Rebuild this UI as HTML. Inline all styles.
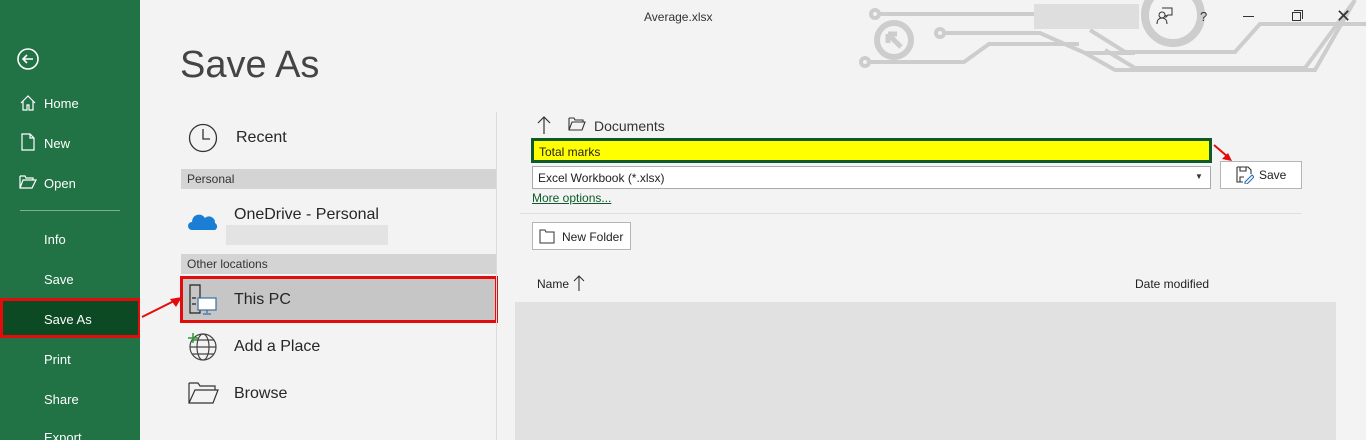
<!DOCTYPE html>
<html><head><meta charset="utf-8"><style>
*{margin:0;padding:0;box-sizing:border-box}
html,body{overflow:hidden}
body{width:1366px;height:440px;background:#f3f3f3;font-family:"Liberation Sans",sans-serif;position:relative;color:#262626}
.a{position:absolute}
.side{left:0;top:0;width:140px;height:440px;background:#217346;color:#fff;overflow:hidden}
.side div{position:absolute;font-size:13px;color:#fff}
.sec{left:181px;width:315px;height:20px;background:#d4d4d4;font-size:12px;padding:3px 6px;color:#333}
.loc{font-size:16px;color:#262626}
</style></head><body>
<div class="a side">
<svg class="a" style="left:16px;top:47px" width="24" height="24" viewBox="0 0 24 24"><circle cx="12" cy="12" r="10" fill="none" stroke="#fff" stroke-width="1.6"/><path d="M17 12H7M11 8l-4 4 4 4" fill="none" stroke="#fff" stroke-width="1.6"/></svg>
<svg class="a" style="left:19px;top:94px" width="18" height="18" viewBox="0 0 18 18"><path d="M2 9L9 2l7 7M4 7v9h4v-5h2v5h4V7" fill="none" stroke="#fff" stroke-width="1.2"/></svg>
<div style="left:44px;top:96px">Home</div>
<svg class="a" style="left:21px;top:133px" width="14" height="18" viewBox="0 0 14 18"><path d="M1 1h8l4 4v12H1z M9 1v4h4" fill="none" stroke="#fff" stroke-width="1.2"/></svg>
<div style="left:44px;top:136px">New</div>
<svg class="a" style="left:19px;top:175px" width="18" height="14" viewBox="0 0 18 14"><path d="M1 1h5l1 2h7v2 M1 1v12h12l4-8H4L1 13" fill="none" stroke="#fff" stroke-width="1.2"/></svg>
<div style="left:44px;top:176px">Open</div>
<div style="left:20px;top:210px;width:100px;height:1px;background:#7fb08f"></div>
<div style="left:44px;top:232px">Info</div>
<div style="left:44px;top:272px">Save</div>
<div style="left:0;top:298px;width:141px;height:40px;background:#0b4a22;border:3px solid #e30b0b"></div>
<div style="left:44px;top:312px">Save As</div>
<div style="left:44px;top:352px">Print</div>
<div style="left:44px;top:392px">Share</div>
<div style="left:44px;top:430px">Export</div>
</div>
<svg class="a" style="left:140px;top:295px" width="45" height="25"><path d="M2 22L38 4" stroke="#e30b0b" stroke-width="2"/><path d="M42 2l-12 2 6 8z" fill="#e30b0b"/></svg>
<svg class="a" style="left:840px;top:0" width="526" height="80" fill="none" stroke="#cdcdcd" stroke-width="4">
<circle cx="35" cy="14" r="4"/><path d="M39 14h160"/>
<circle cx="54" cy="40" r="17" stroke-width="6"/><path d="M48 34l13 13M48 34h9M48 34v9" stroke-width="5"/>
<circle cx="100" cy="33" r="4"/><path d="M104 33h96l45 20h50M245 53l30 17h200l40-70"/>
<circle cx="25" cy="62" r="4"/><path d="M29 62h95l25-18h90"/>
<path d="M250 30l35 22h110l25-28h106"/>
<path d="M265 50l30 18h170l50-68"/>
<circle cx="333" cy="15" r="28" stroke-width="8"/>
</svg>
<div class="a" style="left:1034px;top:4px;width:105px;height:25px;background:#dedede"></div>
<div class="a" style="left:644px;top:10px;font-size:12px;color:#333">Average.xlsx</div>
<svg class="a" style="left:1155px;top:6px" width="20" height="20" viewBox="0 0 20 20" fill="none" stroke="#333"><path d="M7 2h10v7h-4l-2 2v-2"/><circle cx="7" cy="9" r="3"/><path d="M2 18c0-4 2-6 5-6s5 2 5 6"/></svg>
<div class="a" style="left:1200px;top:9px;font-size:13px;color:#333">?</div>
<div class="a" style="left:1243px;top:16px;width:11px;height:1px;background:#333"></div>
<div class="a" style="left:1292px;top:12px;width:9px;height:9px;border:1px solid #333"></div>
<div class="a" style="left:1294px;top:10px;width:9px;height:9px;border-top:1px solid #333;border-right:1px solid #333"></div>
<div class="a" style="left:1336px;top:6px;font-size:18px;color:#333">✕</div>
<div class="a" style="left:180px;top:44px;font-size:38px;color:#444">Save As</div>
<svg class="a" style="left:188px;top:123px" width="30" height="30" viewBox="0 0 30 30" fill="none" stroke="#333" stroke-width="1.3"><circle cx="15" cy="15" r="13.5"/><path d="M15 6v10h7"/></svg>
<div class="a loc" style="left:236px;top:129px">Recent</div>
<div class="a sec" style="top:169px">Personal</div>
<svg class="a" style="left:188px;top:210px" width="30" height="22" viewBox="0 0 30 22"><path d="M4 20a4 4 0 0 1 0-8a7 7 0 0 1 13-4a6 6 0 0 1 10 5a4 4 0 0 1 0 7z" fill="#1a7ed4"/></svg>
<div class="a loc" style="left:234px;top:206px">OneDrive - Personal</div>
<div class="a" style="left:226px;top:225px;width:162px;height:20px;background:#e3e3e3"></div>
<div class="a sec" style="top:254px">Other locations</div>
<div class="a" style="left:180px;top:276px;width:318px;height:47px;background:#c6c6c6;border:3px solid #e30b0b"></div>
<svg class="a" style="left:188px;top:284px" width="30" height="32" viewBox="0 0 30 32" fill="none" stroke="#222" stroke-width="1.2"><path d="M2 1h10v28H2zM4 14h4M4 20h4"/><rect x="10" y="14" width="18" height="12" fill="#fff" stroke="#3b6ea5"/><path d="M19 26v3M15 30h8" stroke="#3b6ea5"/></svg>
<div class="a loc" style="left:234px;top:291px">This PC</div>
<svg class="a" style="left:186px;top:330px" width="32" height="32" viewBox="0 0 32 32" fill="none" stroke="#444" stroke-width="1.2"><circle cx="17" cy="17" r="13"/><ellipse cx="17" cy="17" rx="6" ry="13"/><path d="M4 17h26M6 10h22M6 24h22"/><path d="M2 8h10M7 3v10" stroke="#2a9a3a" stroke-width="1.5"/></svg>
<div class="a loc" style="left:234px;top:338px">Add a Place</div>
<svg class="a" style="left:188px;top:381px" width="32" height="24" viewBox="0 0 32 24" fill="none" stroke="#333" stroke-width="1.2"><path d="M1 2h9l2 3h15v4M1 2v20h24l5-13H7L1 22"/></svg>
<div class="a loc" style="left:234px;top:385px">Browse</div>
<div class="a" style="left:496px;top:112px;width:1px;height:328px;background:#dcdcdc"></div>
<svg class="a" style="left:537px;top:115px" width="14" height="20" fill="none" stroke="#333" stroke-width="1.2"><path d="M7 19V2M1 8l6-6 6 6"/></svg>
<svg class="a" style="left:568px;top:117px" width="18" height="14" viewBox="0 0 18 14" fill="none" stroke="#333" stroke-width="1.1"><path d="M1 1h5l1 2h8v2M1 1v12h13l3-8H4L1 13"/></svg>
<div class="a" style="left:594px;top:118px;font-size:14px;color:#333">Documents</div>
<div class="a" style="left:531px;top:138px;width:681px;height:25px;background:#ffff00;border:3px solid #0e5a28;font-size:12px;padding:4px 5px;color:#222">Total marks</div>
<div class="a" style="left:532px;top:166px;width:679px;height:23px;background:#fff;border:1px solid #aaa;font-size:12px;padding:4px 5px;color:#222">Excel Workbook (*.xlsx)</div>
<div class="a" style="left:1195px;top:172px;font-size:8px;color:#333">▼</div>
<svg class="a" style="left:1212px;top:143px" width="24" height="22"><path d="M2 2l14 12" stroke="#e30b0b" stroke-width="2"/><path d="M20 18l-10-2 6-6z" fill="#e30b0b"/></svg>
<div class="a" style="left:1220px;top:161px;width:82px;height:28px;background:#fff;border:1px solid #b5b5b5"></div>
<svg class="a" style="left:1236px;top:166px" width="18" height="18" viewBox="0 0 18 18" fill="none" stroke="#333" stroke-width="1.1"><path d="M1 1h11l3 3v4M1 1v15h6M4 1v4h6V1M4 16v-5h4"/><path d="M9 16l7-7 2 2-7 7h-2z" stroke="#2a6ab8"/></svg>
<div class="a" style="left:1259px;top:168px;font-size:12px;color:#222">Save</div>
<div class="a" style="left:532px;top:191px;font-size:12px;color:#0e5a28;text-decoration:underline">More options...</div>
<div class="a" style="left:520px;top:213px;width:782px;height:1px;background:#dedede"></div>
<div class="a" style="left:532px;top:222px;width:99px;height:28px;background:#fff;border:1px solid #b5b5b5"></div>
<svg class="a" style="left:539px;top:228px" width="16" height="16" viewBox="0 0 16 16" fill="none" stroke="#333"><path d="M1 2h5l1 2h8v11H1z"/></svg>
<div class="a" style="left:562px;top:230px;font-size:12px;color:#222">New Folder</div>
<div class="a" style="left:537px;top:277px;font-size:12px;color:#222">Name</div>
<svg class="a" style="left:573px;top:274px" width="12" height="18" fill="none" stroke="#333" stroke-width="1.1"><path d="M6 17V2M1 7l5-5 5 5"/></svg>
<div class="a" style="left:1135px;top:277px;font-size:12px;color:#222">Date modified</div>
<div class="a" style="left:515px;top:302px;width:821px;height:138px;background:#e1e1e1"></div>
</body></html>
